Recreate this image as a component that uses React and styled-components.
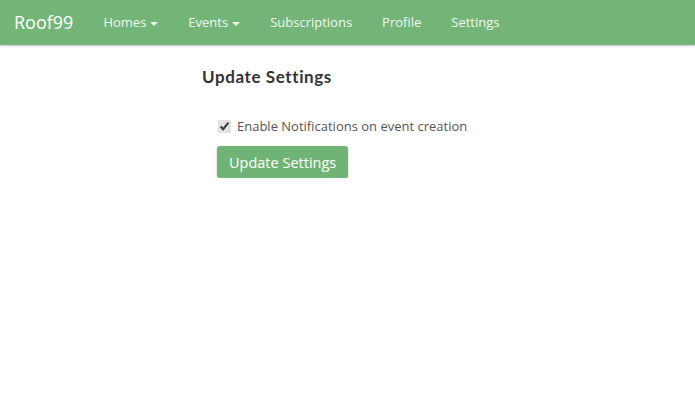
import React, { useState } from 'react';
import styled, { createGlobalStyle } from 'styled-components';

const GlobalStyle = createGlobalStyle`
  html, body {
    margin: 0;
    padding: 0;
    background: #fff;
    font-family: "Open Sans", "Liberation Sans", sans-serif;
    font-size: 13px;
    color: #555;
  }
`;

const Navbar = styled.nav`
  display: flex;
  align-items: center;
  height: 45px;
  background: #72b577;
  box-shadow: 0 1px 2px rgba(0, 0, 0, 0.25);
`;

const Brand = styled.a`
  padding: 0 15px 0 14px;
  font-size: 18px;
  color: #fff;
  text-decoration: none;
  line-height: 45px;
`;

const NavList = styled.ul`
  display: flex;
  margin: 0;
  padding: 0;
  list-style: none;
`;

const NavLink = styled.a`
  display: flex;
  align-items: center;
  gap: 4px;
  padding: 0 15px;
  line-height: 43px;
  font-size: 13px;
  color: #f2f8f2;
  text-decoration: none;
`;

const Caret = styled.span`
  display: inline-block;
  width: 0;
  height: 0;
  margin-top: 2px;
  border-top: 4px solid #f2f8f2;
  border-left: 4px solid transparent;
  border-right: 4px solid transparent;
`;

const Main = styled.main`
  padding: 20px 0 0 202px;
`;

const Heading = styled.h3`
  margin: 0 0 27px;
  font-family: "Lato", "Open Sans", sans-serif;
  font-weight: 700;
  font-size: 17px;
  line-height: 24px;
  color: #333;
  letter-spacing: 0.6px;
`;

const Form = styled.form`
  padding-left: 15px;
  display: flex;
  flex-direction: column;
  align-items: flex-start;
  gap: 10px;
`;

const CheckLabel = styled.label`
  display: flex;
  align-items: center;
  gap: 6px;
  line-height: 20px;
  color: #555;
`;

const Check = styled.input`
  margin: 0 0 0 1px;
  width: 13px;
  height: 13px;
  accent-color: #e2e2e2;
`;

const Button = styled.button`
  height: 32px;
  padding: 0 12px;
  border: none;
  border-radius: 3px;
  background: #70b475;
  color: #fff;
  font-family: "Open Sans", "Liberation Sans", sans-serif;
  font-size: 14.5px;
  box-shadow: 0 1px 2px rgba(0, 0, 0, 0.3);
  cursor: pointer;
`;

const links = [
  { label: 'Homes', dropdown: true },
  { label: 'Events', dropdown: true },
  { label: 'Subscriptions' },
  { label: 'Profile' },
  { label: 'Settings' },
];

const App = () => {
  const [notify, setNotify] = useState(true);

  return (
    <>
      <GlobalStyle />
      <Navbar>
        <Brand href="#">Roof99</Brand>
        <NavList>
          {links.map((link) => (
            <li key={link.label}>
              <NavLink href="#">
                {link.label}
                {link.dropdown && <Caret />}
              </NavLink>
            </li>
          ))}
        </NavList>
      </Navbar>
      <Main>
        <Heading>Update Settings</Heading>
        <Form onSubmit={(e) => e.preventDefault()}>
          <CheckLabel>
            <Check
              type="checkbox"
              checked={notify}
              onChange={(e) => setNotify(e.target.checked)}
            />
            Enable Notifications on event creation
          </CheckLabel>
          <Button type="submit">Update Settings</Button>
        </Form>
      </Main>
    </>
  );
};

export default App;
